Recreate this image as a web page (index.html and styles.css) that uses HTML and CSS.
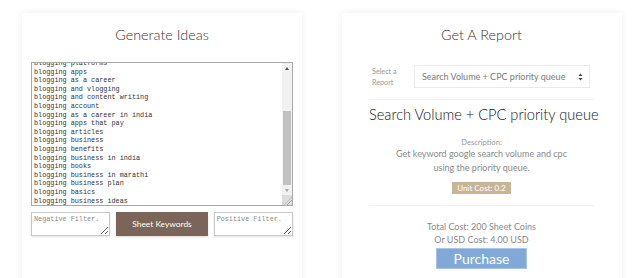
FILE: index.html
```html
<!DOCTYPE html>
<html lang="en">
<head>
    <meta charset="UTF-8">
    <meta name="viewport" content="width=device-width, initial-scale=1.0">
    <title>Keyword Sheets</title>
    <link rel="stylesheet" href="styles.css">
</head>
<body>
    <div class="page">
        <section class="card ideas">
            <h2>Generate Ideas</h2>
            <div class="keywords">
                <div class="kw-list">
                    <div>blogging platforms</div>
                    <div>blogging apps</div>
                    <div>blogging as a career</div>
                    <div>blogging and vlogging</div>
                    <div>blogging and content writing</div>
                    <div>blogging account</div>
                    <div>blogging as a career in india</div>
                    <div>blogging apps that pay</div>
                    <div>blogging articles</div>
                    <div>blogging business</div>
                    <div>blogging benefits</div>
                    <div>blogging business in india</div>
                    <div>blogging books</div>
                    <div>blogging business in marathi</div>
                    <div>blogging business plan</div>
                    <div>blogging basics</div>
                    <div>blogging business ideas</div>
                </div>
                <div class="scrollbar">
                    <span class="arrow up"></span>
                    <span class="track"><span class="thumb"></span></span>
                    <span class="arrow down"></span>
                    <span class="corner"></span>
                </div>
            </div>
            <div class="filters">
                <textarea class="filter" placeholder="Negative Filter."></textarea>
                <button class="sheet-btn">Sheet Keywords</button>
                <textarea class="filter" placeholder="Positive Filter."></textarea>
            </div>
        </section>

        <section class="card report">
            <h2>Get A Report</h2>
            <div class="select-row">
                <label for="report">Select a Report</label>
                <div class="select-box" id="report">
                    <span>Search Volume + CPC priority queue</span>
                    <svg class="updown" width="5" height="8" viewBox="0 0 5 8">
                        <path d="M2.5 0.5 L4.5 3 L0.5 3 Z M0.5 5 L4.5 5 L2.5 7.5 Z" fill="#444"/>
                    </svg>
                </div>
            </div>
            <hr>
            <h3>Search Volume + CPC priority queue</h3>
            <p class="desc-label">Description:</p>
            <p class="desc">Get keyword google search volume and cpc<br>using the priority queue.</p>
            <span class="unit-cost">Unit Cost: 0.2</span>
            <hr>
            <p class="total">Total Cost: 200 Sheet Coins<br>Or USD Cost: 4.00 USD</p>
            <button class="purchase-btn">Purchase</button>
        </section>
    </div>
</body>
</html>
```

FILE: styles.css
```css
*{
    margin: 0px;
    padding: 0px;
    box-sizing: border-box;
}

body{
    background-color: #fff;
    font-family: Lato, "Open Sans", sans-serif;
    overflow: hidden;
}

.page{
    display: flex;
    gap: 40px;
    padding: 13px 0 0 22px;
}

.card{
    width: 280px;
    height: 300px;
    background-color: #fff;
    box-shadow: 0 0 7px rgba(0, 0, 0, .07);
    text-align: center;
}

h2{
    font-size: 14.4px;
    font-weight: 300;
    line-height: 20px;
    color: #3f2f28;
    margin-top: 12px;
}

/* left card */
.ideas{
    padding: 0 9px;
}

.ideas h2{
    margin-bottom: 17px;
}

.keywords{
    display: flex;
    height: 144px;
    border: 1px solid #a9a9a9;
    text-align: left;
    overflow: hidden;
}

.kw-list{
    flex: 1;
    margin-top: -4px;
    padding-left: 2px;
    font-family: "Liberation Mono", monospace;
    font-size: 6.8px;
    line-height: 8.6px;
    color: #333;
}

.scrollbar{
    width: 10px;
    display: flex;
    flex-direction: column;
    background-color: #f1f1f1;
}

.arrow{
    height: 10px;
    display: flex;
    align-items: center;
    justify-content: center;
}

.arrow::before{
    content: "";
    border-left: 2px solid transparent;
    border-right: 2px solid transparent;
}

.arrow.up::before{
    border-bottom: 3px solid #505050;
}

.arrow.down::before{
    border-top: 3px solid #a3a3a3;
}

.track{
    flex: 1;
    display: flex;
    flex-direction: column;
    justify-content: flex-end;
}

.thumb{
    height: 74px;
    margin: 0 1px;
    background-color: #c1c1c1;
}

.corner{
    height: 10px;
    background: linear-gradient(135deg, #dcdcdc 55%, #999 57%, #dcdcdc 62%, #dcdcdc 72%, #999 74%, #dcdcdc 79%);
}

.filters{
    display: flex;
    gap: 5px;
    margin-top: 6px;
    height: 24px;
}

.filter{
    width: 80px;
    height: 24px;
    border: 1px solid #c8c8c8;
    box-shadow: 0 1px 2px rgba(0, 0, 0, .12);
    padding: 2px 2px;
    font-family: "Liberation Mono", monospace;
    font-size: 6.8px;
    line-height: 8px;
    resize: vertical;
    overflow: hidden;
}

.filter::placeholder{
    color: #8a8a8a;
}

.sheet-btn{
    width: 92px;
    margin: 0 1px;
    border: none;
    background-color: #7a6558;
    color: #fff;
    font-family: Lato, sans-serif;
    font-size: 8.4px;
    box-shadow: 0 1px 2px rgba(0, 0, 0, .15);
}

/* right card */
.report{
    padding: 0 28px 0 27px;
}

.select-row{
    display: flex;
    align-items: center;
    margin-top: 20px;
    padding: 0 4px 0 3px;
}

.select-row label{
    width: 42px;
    text-align: left;
    font-size: 7.2px;
    line-height: 11px;
    color: #9a9a9a;
    padding-right: 10px;
}

.select-box{
    flex: 1;
    height: 23px;
    display: flex;
    align-items: center;
    justify-content: space-between;
    padding: 0 6px 0 7px;
    border: 1px solid #ebebeb;
    font-size: 9px;
    color: #7a7a7a;
}

hr{
    border: none;
    border-top: 1px solid #f3f3f3;
    margin-top: 11px;
}

h3{
    font-size: 14.6px;
    font-weight: 300;
    line-height: 20px;
    color: #111;
    margin-top: 5px;
    white-space: nowrap;
}

.desc-label{
    margin-top: 12px;
    font-size: 7.6px;
    line-height: 10px;
    color: #9a9a9a;
}

.desc{
    font-size: 9px;
    line-height: 14px;
    color: #8a8a8a;
}

.unit-cost{
    display: inline-block;
    margin-top: 5px;
    padding: 0 5px;
    height: 12px;
    line-height: 12px;
    font-size: 8px;
    color: #fff;
    background-color: #cab498;
}

.total{
    margin-top: 14px;
    font-size: 9px;
    line-height: 13px;
    color: #8a8a8a;
}

.purchase-btn{
    display: block;
    margin: 2px auto 0;
    width: 91px;
    height: 21px;
    border: 1px solid #a9c4e6;
    background-color: #80a9d7;
    color: #fff;
    font-family: Lato, sans-serif;
    font-size: 14px;
    line-height: 18px;
}
```
